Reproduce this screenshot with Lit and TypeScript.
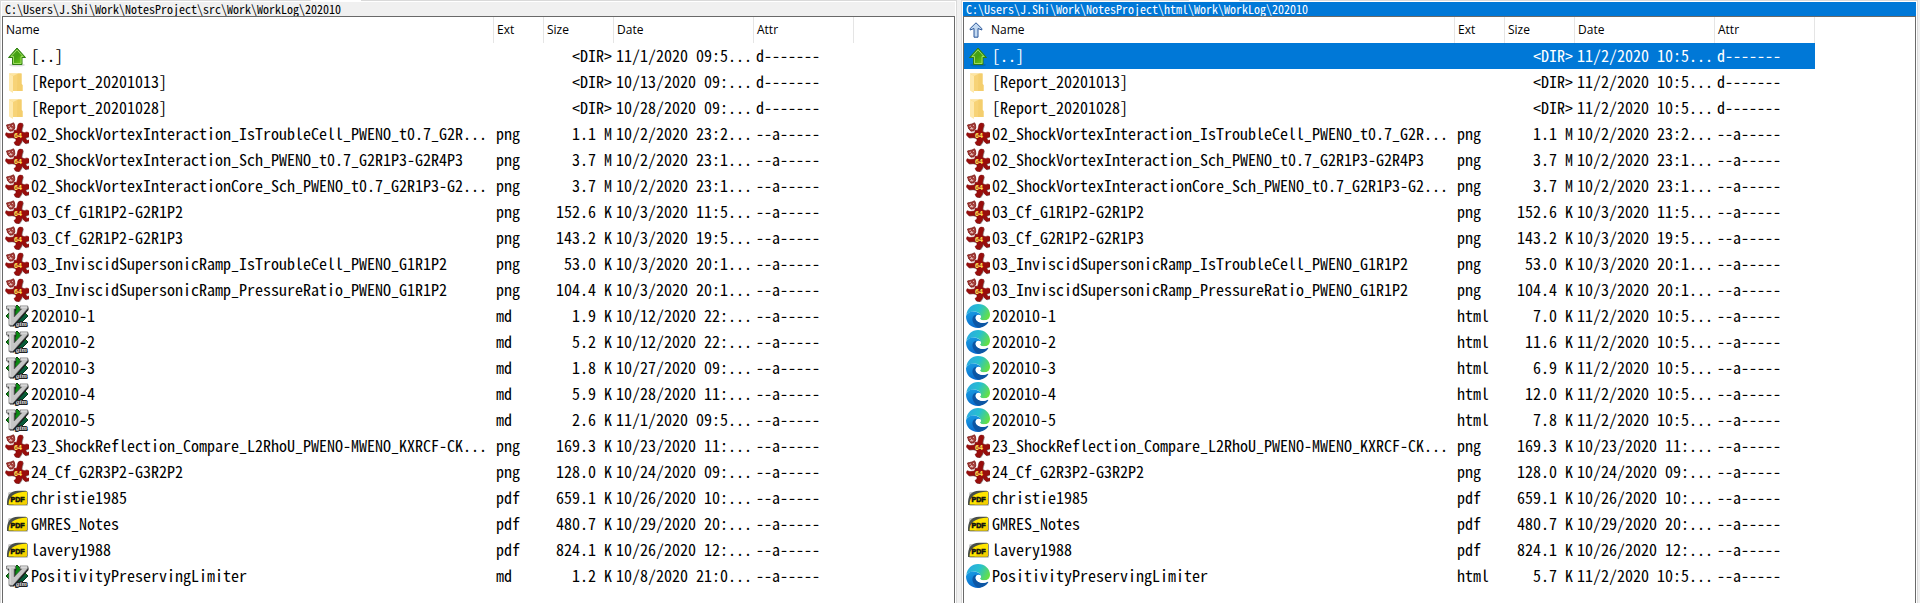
import { LitElement, html, css, svg } from "lit";
import { customElement, property } from "lit/decorators.js";

type Kind = "up" | "folder" | "image" | "vim" | "edge" | "pdf";
type Entry = [kind: Kind, name: string, ext: string, size: string, date: string, attr: string];

const DIR = "d-------";
const FILE = "--a-----";

const images: Entry[] = [
  ["image", "02_ShockVortexInteraction_IsTroubleCell_PWENO_t0.7_G2R...", "png", "1.1 M", "10/2/2020 23:2...", FILE],
  ["image", "02_ShockVortexInteraction_Sch_PWENO_t0.7_G2R1P3-G2R4P3", "png", "3.7 M", "10/2/2020 23:1...", FILE],
  ["image", "02_ShockVortexInteractionCore_Sch_PWENO_t0.7_G2R1P3-G2...", "png", "3.7 M", "10/2/2020 23:1...", FILE],
  ["image", "03_Cf_G1R1P2-G2R1P2", "png", "152.6 K", "10/3/2020 11:5...", FILE],
  ["image", "03_Cf_G2R1P2-G2R1P3", "png", "143.2 K", "10/3/2020 19:5...", FILE],
  ["image", "03_InviscidSupersonicRamp_IsTroubleCell_PWENO_G1R1P2", "png", "53.0 K", "10/3/2020 20:1...", FILE],
  ["image", "03_InviscidSupersonicRamp_PressureRatio_PWENO_G1R1P2", "png", "104.4 K", "10/3/2020 20:1...", FILE],
];

const papers: Entry[] = [
  ["image", "23_ShockReflection_Compare_L2RhoU_PWENO-MWENO_KXRCF-CK...", "png", "169.3 K", "10/23/2020 11:...", FILE],
  ["image", "24_Cf_G2R3P2-G3R2P2", "png", "128.0 K", "10/24/2020 09:...", FILE],
  ["pdf", "christie1985", "pdf", "659.1 K", "10/26/2020 10:...", FILE],
  ["pdf", "GMRES_Notes", "pdf", "480.7 K", "10/29/2020 20:...", FILE],
  ["pdf", "lavery1988", "pdf", "824.1 K", "10/26/2020 12:...", FILE],
];

const source: Entry[] = [
  ["up", "[..]", "", "<DIR>", "11/1/2020 09:5...", DIR],
  ["folder", "[Report_20201013]", "", "<DIR>", "10/13/2020 09:...", DIR],
  ["folder", "[Report_20201028]", "", "<DIR>", "10/28/2020 09:...", DIR],
  ...images,
  ["vim", "202010-1", "md", "1.9 K", "10/12/2020 22:...", FILE],
  ["vim", "202010-2", "md", "5.2 K", "10/12/2020 22:...", FILE],
  ["vim", "202010-3", "md", "1.8 K", "10/27/2020 09:...", FILE],
  ["vim", "202010-4", "md", "5.9 K", "10/28/2020 11:...", FILE],
  ["vim", "202010-5", "md", "2.6 K", "11/1/2020 09:5...", FILE],
  ...papers,
  ["vim", "PositivityPreservingLimiter", "md", "1.2 K", "10/8/2020 21:0...", FILE],
];

const output: Entry[] = [
  ["up", "[..]", "", "<DIR>", "11/2/2020 10:5...", DIR],
  ["folder", "[Report_20201013]", "", "<DIR>", "11/2/2020 10:5...", DIR],
  ["folder", "[Report_20201028]", "", "<DIR>", "11/2/2020 10:5...", DIR],
  ...images,
  ["edge", "202010-1", "html", "7.0 K", "11/2/2020 10:5...", FILE],
  ["edge", "202010-2", "html", "11.6 K", "11/2/2020 10:5...", FILE],
  ["edge", "202010-3", "html", "6.9 K", "11/2/2020 10:5...", FILE],
  ["edge", "202010-4", "html", "12.0 K", "11/2/2020 10:5...", FILE],
  ["edge", "202010-5", "html", "7.8 K", "11/2/2020 10:5...", FILE],
  ...papers,
  ["edge", "PositivityPreservingLimiter", "html", "5.7 K", "11/2/2020 10:5...", FILE],
];

const bear = "M9.500 8 11.500 8.500 12.300 6 13 2.500Q14.500.300 17.500 1.500 18.500 3 17 6L16.500 9.500Q19 11.500 22 10L24 11V14.500L21.500 15.500 20.500 16.500 22 18.500 24 18V20.500L20.500 21.500Q18 20 17 17.500L16.500 20 14 23.500 10.500 23 9 20.500 11 19V17Q9.500 15.500 7 15.500L3 15.800.500 13 1 10.800 4 11.500 8.500 11Z";

const art = {
  up: svg`
    <defs><linearGradient id="g" x1="0" y1="0" x2="1" y2="1">
      <stop offset="0" stop-color="#4fa822"/><stop offset=".5" stop-color="#43a010"/><stop offset="1" stop-color="#7ed61c"/>
    </linearGradient></defs>
    <ellipse cx="12" cy="21" rx="8" ry="1.6" fill="#000" opacity=".13"/>
    <path d="M12 4 20.500 13.500H17V20.500H7.500V13.500H3.500Z" fill="url(#g)" stroke="#2f7d12" stroke-linejoin="round"/>
    <path d="M12 5.800 18 12.500H16V19.500H8.500V12.500H6Z" fill="none" stroke="#a5e06a" stroke-width=".9"/>`,
  folder: svg`
    <path d="M4 3.500H16.500V14L17.500 15V21H8Z" fill="#f7d377"/>
    <path d="M12.500 3.500H16.500V14L17.500 15V21H12Z" fill="#f4ce6d"/>
    <path d="M4 3.500 8 6V23L4 20.500Z" fill="#fee9ad"/>
    <path d="M8 6 13 3.500H4Z" fill="#fde6a3"/>`,
  image: svg`
    <path d=${bear} fill="#000" opacity=".35" transform="translate(.800 .800)"/>
    <path d=${bear} fill="#990d0b" stroke="#7d0808" stroke-width=".6"/>
    <path d="M1.500 3 3.500 2.500 6 2 8.500.800 9.500 2.500 9.800 6 8 8.800 5 9.200 2.800 7Z" fill="#a23a36" stroke="#7a1512" stroke-width=".8"/>
    <path d="M3.500 4.500 5 4M7 3 8.200 4M4 6.800 7.500 6.200M5.500 5 6.200 7.600" stroke="#e3bab5"/>
    <text x="9" y="15.500" font-family="Liberation Sans" font-size="7" font-weight="700" fill="#ffe95a">64</text>`,
  vim: svg`
    <path d="M12 1 23 12 12 23 1 12Z" fill="#0b8a13" stroke="#06460a"/>
    <path d="M12 23 23 12 19 10 10 20Z" fill="#000080" opacity=".35"/>
    <path d="M2 2.500H10.500V5.500H9.700V12.500L16 5.500H14.500V2.500H22.800V5L8.200 21.500H4.200V5.500H2Z" fill="#1b1b1b" transform="translate(.7 .9)"/>
    <path d="M1.500 2H10.500V5H9.200V13L16.500 5H15V2H22.800V4.500L7.800 21.500H4V5H1.500Z" fill="#c6c6c6" stroke="#606060" stroke-width=".7"/>
    <path d="M2.500 3H9.600M5 4V20M15.800 3H22" stroke="#ececec" stroke-width=".9"/>
    <text x="11" y="21.500" font-family="Liberation Serif" font-style="italic" font-size="7" font-weight="700" fill="#ddd" stroke="#222" stroke-width="2" paint-order="stroke">gim</text>`,
  edge: svg`
    <defs>
      <linearGradient id="t" x1="0" y1=".2" x2="1" y2=".6"><stop offset="0" stop-color="#2ba7e3"/><stop offset=".5" stop-color="#27c0cf"/><stop offset="1" stop-color="#66e045"/></linearGradient>
      <linearGradient id="b" x1="0" y1="0" x2=".4" y2="1"><stop offset="0" stop-color="#1aa0e4"/><stop offset="1" stop-color="#0869cc"/></linearGradient>
    </defs>
    <path d="M.3 11C1 4.500 6 0 12 0 19 0 24 5 24 10.500 24 14.500 21.500 16.300 18.500 16.300 15.500 16.300 13.800 15.300 14 14.500 14.800 13.500 15 13 14.700 11.800 14 9 11 7.600 8 7.600 4.500 7.600 2 8.800.3 11Z" fill="url(#t)"/>
    <path d="M0 12.500C.5 9.300 4 7.200 8 7.400 11.500 7.600 14.500 9.500 14.800 12 12.500 9.800 9.500 11.500 9.300 14.500 9 19 13.500 22 17.500 21 15.800 23 14 24 12 24 5 24 0 19 0 12.500Z" fill="url(#b)"/>
    <path d="M9.800 10.700C6.500 12 5.800 15 7 18 8.200 21.300 11 23.800 13.800 23.800 17.800 23.200 20.800 21 22.300 18.300 22.500 17.700 22 17.500 21.400 17.900 18 19.600 12 19.400 9.900 15.500 9 13.500 9.500 12 10.300 11Z" fill="#0c56a4"/>
    <path d="M14.700 11.800C13 9.500 9.900 11 9.700 13.600 9.700 17.500 14.500 19.700 19 18.500 21 17.900 22.300 17.200 23 15 20 17 15 16.800 14 15 14 14.300 15.300 13.600 14.700 11.800Z" fill="#fff"/>`,
  pdf: svg`
    <rect x="3" y="6" width="20" height="14" rx="1.500" fill="#000" opacity=".22"/>
    <path d="M2 19C1.500 10 5 5 13 4.800H20.500Q22.500 4.800 22.500 6.500V17.500Q22.500 19 20.500 19Z" fill="#494f4a"/>
    <path d="M3.600 18.500C3.500 11.500 8 6 22 5.500V17.300Q22 18.500 20.500 18.500Z" fill="#ffe500"/>
    <path d="M22 12V17.300Q22 18.500 20.500 18.500H8Z" fill="#f4cf00"/>
    <text x="5.500" y="16" font-family="Liberation Sans" font-size="7" font-weight="700" fill="#111" stroke="#111" stroke-width=".6">PDF</text>`,
};

@customElement("file-icon")
export class FileIcon extends LitElement {
  @property() kind: Kind = "folder";

  static styles = css`
    :host { display: block; flex: none; width: 24px; height: 24px; }
    .art { display: block; width: 24px; height: 24px; }
  `;

  render() {
    return html`<svg class="art" viewBox="0 0 24 24" aria-hidden="true">${art[this.kind]}</svg>`;
  }
}

@customElement("file-pane")
export class FilePane extends LitElement {
  @property() path = "";
  @property({ attribute: false }) entries: Entry[] = [];
  @property({ type: Boolean, reflect: true }) active = false;

  static styles = css`
    :host {
      display: flex;
      flex-direction: column;
      min-width: 0;
      box-sizing: border-box;
      padding: 0 1px;
      background: #fff;
      border: solid #d9d9d9;
      border-width: 0 1px;
    }
    .tabs { display: flex; height: 2px; flex: none; margin: 0 -1px; }
    .edge { width: 310px; height: 1px; background: #d9d9d9; }
    :host([active]) .edge { width: 227px; }
    .current { width: 50px; }
    .rest { flex: 1; height: 1px; background: #d9d9d9; }
    .path {
      flex: none;
      height: 14px;
      padding-left: 3px;
      background: #f0f0f0;
      font: 12px/14px "Noto Sans Mono CJK SC", "Liberation Mono", monospace;
      color: #000;
      white-space: pre;
    }
    :host([active]) .path { background: #0078d7; color: #fff; }
    .list {
      flex: 1;
      min-height: 0;
      overflow: hidden;
      border: 1px solid #696969;
      border-bottom: 0;
    }
    table { width: 851px; border-collapse: separate; border-spacing: 0; table-layout: fixed; }
    th, td { height: 26px; padding: 0; text-align: left; font-weight: 400; }
    .name { width: 491px; }
    .ext { width: 50px; }
    .size { width: 70px; }
    .date { width: 140px; }
    .attr { width: 100px; }
    .sort {
      display: flex;
      align-items: center;
      gap: 8px;
      box-sizing: border-box;
      width: 100%;
      height: 26px;
      margin: 0;
      padding: 0 3px;
      border: 0;
      border-right: 1px solid #e5e5e5;
      background: none;
      font: 12px/24px "Open Sans", "Noto Sans", sans-serif;
      color: #000;
      text-align: left;
    }
    .arrow { width: 14px; height: 16px; margin-left: 2px; }
    td {
      box-sizing: border-box;
      padding: 0 2px 2px;
      font: 16px/24px "Noto Sans Mono CJK SC", "Liberation Mono", monospace;
      color: #000;
      white-space: pre;
    }
    .file { display: flex; align-items: flex-start; gap: 2px; height: 24px; }
    file-icon { margin-top: 1px; }
    td.num { text-align: right; }
    .selected td { background: #0078d7; color: #fff; }
  `;

  private get arrow() {
    return html`<svg class="arrow" viewBox="0 0 14 16" aria-hidden="true">
      <path d="M7 .800 12.800 6.500V8L9 6.500V15.200H5V6.500L1.200 8V6.500Z" fill="#c3d9f1" stroke="#2b579a" stroke-linejoin="round"/>
    </svg>`;
  }

  render() {
    return html`
      <div class="tabs"><span class="edge"></span><span class="current"></span><span class="rest"></span></div>
      <div class="path">${this.path}</div>
      <div class="list">
        <table>
          <thead>
            <tr>
              <th class="name"><button class="sort">${this.active ? this.arrow : null}Name</button></th>
              <th class="ext"><button class="sort">Ext</button></th>
              <th class="size"><button class="sort">Size</button></th>
              <th class="date"><button class="sort">Date</button></th>
              <th class="attr"><button class="sort">Attr</button></th>
            </tr>
          </thead>
          <tbody>
            ${this.entries.map(
              ([kind, name, ext, size, date, attr], i) => html`
                <tr class=${this.active && i === 0 ? "selected" : ""}>
                  <td><div class="file"><file-icon .kind=${kind}></file-icon><span>${name}</span></div></td>
                  <td>${ext}</td>
                  <td class="num">${size}</td>
                  <td>${date}</td>
                  <td>${attr}</td>
                </tr>`
            )}
          </tbody>
        </table>
      </div>`;
  }
}

@customElement("app-root")
export class AppRoot extends LitElement {
  static styles = css`
    :host {
      display: grid;
      grid-template-columns: 1fr 1fr;
      column-gap: 4px;
      box-sizing: border-box;
      height: 100vh;
      padding-right: 2px;
      background: #f0f0f0;
    }
  `;

  render() {
    return html`
      <file-pane path="C:\\Users\\J.Shi\\Work\\NotesProject\\src\\Work\\WorkLog\\202010" .entries=${source}></file-pane>
      <file-pane active path="C:\\Users\\J.Shi\\Work\\NotesProject\\html\\Work\\WorkLog\\202010" .entries=${output}></file-pane>`;
  }
}
